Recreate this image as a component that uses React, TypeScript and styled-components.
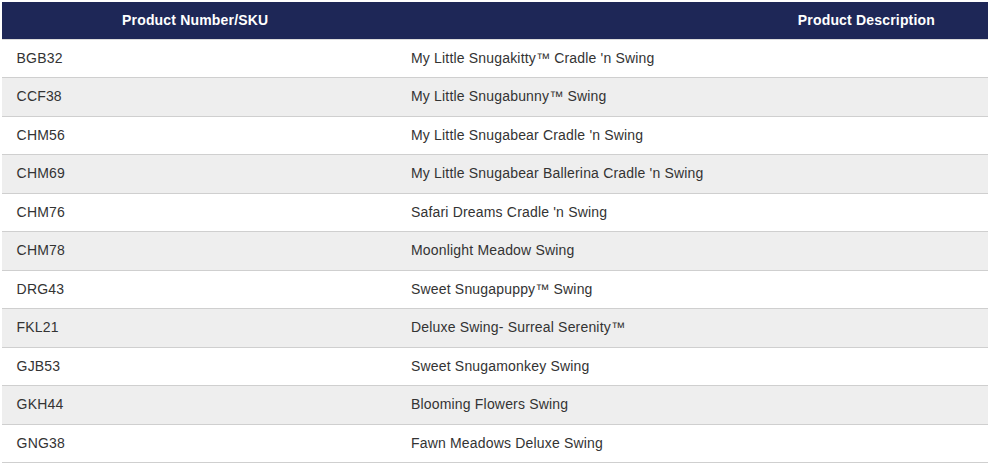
import React from "react";
import styled, { createGlobalStyle } from "styled-components";

const GlobalStyle = createGlobalStyle`
  html, body {
    margin: 0;
    padding: 0;
    background: #ffffff;
  }
  body {
    font-family: "Liberation Sans", Arial, sans-serif;
  }
`;

const Page = styled.div`
  padding: 2px 0 0 2px;
`;

const Table = styled.table`
  width: 986px;
  border-collapse: collapse;
  table-layout: fixed;
  font-family: "Liberation Sans", Arial, sans-serif;
  font-size: 14px;
  letter-spacing: 0.18px;
  color: #333333;
`;

const HeadRow = styled.tr`
  background: #1e2757;
`;

const HeadCell = styled.th<{ $align: "center" | "right"; $padRight?: number }>`
  color: #ffffff;
  font-weight: bold;
  text-align: ${(p) => p.$align};
  padding: 0 ${(p) => p.$padRight ?? 0}px 0 0;
  line-height: 37px;
  height: 37px;
  border-bottom: 1px solid #dcdcdc;
  white-space: nowrap;
`;

const Row = styled.tr<{ $striped: boolean }>`
  background: ${(p) => (p.$striped ? "#eeeeee" : "#ffffff")};
`;

const Cell = styled.td`
  padding: 0 0 0 14.6px;
  line-height: 37.45px;
  border-bottom: 1px solid #cfcfcf;
  white-space: nowrap;
  overflow: hidden;
`;

const rows: [string, string][] = [
  ["BGB32", "My Little Snugakitty™ Cradle 'n Swing"],
  ["CCF38", "My Little Snugabunny™ Swing"],
  ["CHM56", "My Little Snugabear Cradle 'n Swing"],
  ["CHM69", "My Little Snugabear Ballerina Cradle 'n Swing"],
  ["CHM76", "Safari Dreams Cradle 'n Swing"],
  ["CHM78", "Moonlight Meadow Swing"],
  ["DRG43", "Sweet Snugapuppy™ Swing"],
  ["FKL21", "Deluxe Swing- Surreal Serenity™"],
  ["GJB53", "Sweet Snugamonkey Swing"],
  ["GKH44", "Blooming Flowers Swing"],
  ["GNG38", "Fawn Meadows Deluxe Swing"],
];

export default function App() {
  return (
    <Page>
      <GlobalStyle />
      <Table>
        <colgroup>
          <col style={{ width: "40%" }} />
          <col style={{ width: "60%" }} />
        </colgroup>
        <thead>
          <HeadRow>
            <HeadCell $align="center" $padRight={8}>Product Number/SKU</HeadCell>
            <HeadCell $align="right" $padRight={53}>Product Description</HeadCell>
          </HeadRow>
        </thead>
        <tbody>
          {rows.map(([sku, desc], i) => (
            <Row key={sku} $striped={i % 2 === 1}>
              <Cell>{sku}</Cell>
              <Cell>{desc}</Cell>
            </Row>
          ))}
        </tbody>
      </Table>
    </Page>
  );
}
